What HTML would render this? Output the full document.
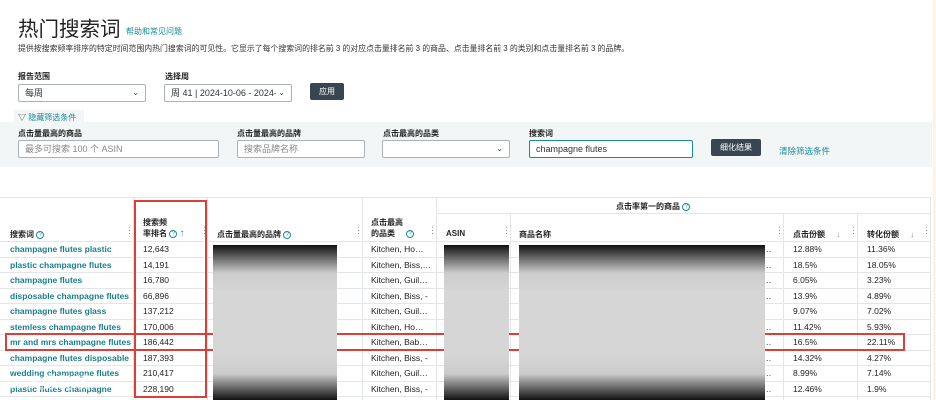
<!DOCTYPE html>
<html><head><meta charset="utf-8"><style>
*{margin:0;padding:0;box-sizing:border-box}
html,body{width:936px;height:400px;overflow:hidden}
body{background:#fff;font-family:"Liberation Sans","Noto Sans CJK SC",sans-serif;color:#222;position:relative}
.a{position:absolute;white-space:nowrap}
.lbl{font-size:8px;font-weight:bold;color:#222}
.box{position:absolute;border:1px solid #aab2b7;background:#fff;border-radius:2px;font-size:9px;color:#333;padding:0 6px;line-height:16px}
.ph{color:#888}
.btn{position:absolute;background:#3a4552;color:#fff;font-size:8px;text-align:center;border-radius:2px}
.link{color:#1a8a99}
.chev{position:absolute;right:6px;top:0;font-size:8px;color:#444}
.hd{font-size:8px;font-weight:bold;color:#222}
.q{display:inline-block;width:8px;height:8px;border:1px solid #1a8a99;border-radius:50%;font-size:6px;line-height:6px;text-align:center;color:#1a8a99;font-weight:normal;vertical-align:middle}
.dots{position:absolute;font-size:9px;color:#888;top:225px}
.row{position:absolute;left:0;width:930px;height:15.5px;border-bottom:1px solid #e3e6e8;font-size:8.5px;line-height:15px}
.row span{position:absolute}
.t{color:#1a7f8c;font-weight:bold;left:10px;width:122px;overflow:hidden}
.vl{position:absolute;top:197px;width:1px;height:203px;background:#e3e6e8}
.blur{position:absolute;top:245px;height:155px;background:linear-gradient(#111 0%,#ccc 18%,#d6d6d6 30%,#d6d6d6 70%,#ccc 83%,#111 100%)}
</style></head><body>
<div class="a" style="left:18px;top:12px;font-size:20.5px;color:#222">热门搜索词</div>
<div class="a link" style="left:126px;top:26px;font-size:8px">帮助和常见问题</div>
<div class="a" style="left:18px;top:43px;font-size:7.9px;color:#333">提供按搜索频率排序的特定时间范围内热门搜索词的可见性。它显示了每个搜索词的排名前 3 的对应点击量排名前 3 的商品、点击量排名前 3 的类别和点击量排名前 3 的品牌。</div>
<div class="a lbl" style="left:18px;top:71px">报告范围</div>
<div class="box" style="left:18px;top:84px;width:128px;height:18px">每周<span class="chev">⌄</span></div>
<div class="a lbl" style="left:165px;top:71px">选择周</div>
<div class="box" style="left:164px;top:84px;width:128px;height:18px">周 41 | 2024-10-06 - 2024-1<span class="chev" style="background:#fff;padding-left:2px">⌄</span></div>
<div class="btn" style="left:310px;top:83px;width:34px;height:17px;line-height:17px">应用</div>
<div class="a" style="left:14px;top:110px;height:13px;width:70px;background:#f2f6f7"></div>
<div class="a" style="left:0;top:122px;width:932px;height:45px;background:#f2f6f7"></div>
<div class="a link" style="left:18px;top:112px;font-size:8px"><span style="color:#333">▽</span> 隐藏筛选条件</div>
<div class="a lbl" style="left:18px;top:128px">点击量最高的商品</div>
<div class="box ph" style="left:18px;top:140px;width:201px;height:18px">最多可搜索 100 个 ASIN</div>
<div class="a lbl" style="left:237px;top:128px">点击量最高的品牌</div>
<div class="box ph" style="left:237px;top:140px;width:128px;height:18px">搜索品牌名称</div>
<div class="a lbl" style="left:383px;top:128px">点击最高的品类</div>
<div class="box" style="left:382px;top:140px;width:128px;height:18px"><span class="chev">⌄</span></div>
<div class="a lbl" style="left:529px;top:128px">搜索词</div>
<div class="box" style="left:529px;top:140px;width:164px;height:18px;border-color:#1a8a99">champagne flutes</div>
<div class="btn" style="left:711px;top:139px;width:50px;height:17px;line-height:17px">细化结果</div>
<div class="a link" style="left:779px;top:145px;font-size:8.5px">清除筛选条件</div>
<div class="a" style="left:933px;top:0;width:3px;height:400px;background:#fbf7d8"></div>
<div class="a" style="left:0;top:197px;width:930px;height:1px;background:#e3e6e8"></div>
<div class="a" style="left:436px;top:213px;width:494px;height:1px;background:#e3e6e8"></div>
<div class="a" style="left:0;top:241px;width:930px;height:1px;background:#e3e6e8"></div>
<div class="vl" style="left:133px"></div><div class="vl" style="left:207px"></div><div class="vl" style="left:362px"></div><div class="vl" style="left:436px"></div><div class="vl" style="left:510px;top:213px;height:187px"></div><div class="vl" style="left:783px;top:213px;height:187px"></div><div class="vl" style="left:857px;top:213px;height:187px"></div><div class="vl" style="left:930px"></div>
<div class="a hd" style="left:616px;top:201px">点击率第一的商品 <span class="q">?</span></div>
<div class="a hd" style="left:10px;top:229px">搜索词 <span class="q">?</span></div>
<div class="a hd" style="left:143px;top:217px;line-height:11px">搜索频<br>率排名 <span class="q">?</span> <span style="color:#1a8a99;font-size:10px">↑</span></div>
<div class="a hd" style="left:217px;top:229px">点击量最高的品牌 <span class="q">?</span></div>
<div class="a hd" style="left:371px;top:217px;line-height:11px">点击最高<br>的品类 &nbsp;&nbsp;&nbsp;&nbsp;<span class="q">?</span></div>
<div class="a hd" style="left:446px;top:229px">ASIN</div>
<div class="a hd" style="left:519px;top:229px">商品名称</div>
<div class="a hd" style="left:793px;top:229px">点击份额 &nbsp;&nbsp;&nbsp;&nbsp;<span style="color:#888;font-weight:normal">↓</span></div>
<div class="a hd" style="left:867px;top:229px">转化份额 &nbsp;&nbsp;&nbsp;&nbsp;<span style="color:#888;font-weight:normal">↓</span></div>
<div class="dots" style="left:125px">⋮</div><div class="dots" style="left:200px">⋮</div><div class="dots" style="left:354px">⋮</div><div class="dots" style="left:428px">⋮</div><div class="dots" style="left:502px">⋮</div><div class="dots" style="left:775px">⋮</div><div class="dots" style="left:849px">⋮</div><div class="dots" style="left:922px">⋮</div>
<div class="row" style="top:242px"><span class="t">champagne flutes plastic</span><span style="left:143px">12,643</span><span style="left:371px">Kitchen, Ho…</span><span style="left:763px">…</span><span style="left:793px">12.88%</span><span style="left:867px">11.36%</span></div>
<div class="row" style="top:257.5px"><span class="t">plastic champagne flutes</span><span style="left:143px">14,191</span><span style="left:371px">Kitchen, Biss,…</span><span style="left:763px">…</span><span style="left:793px">18.5%</span><span style="left:867px">18.05%</span></div>
<div class="row" style="top:273px"><span class="t">champagne flutes</span><span style="left:143px">16,780</span><span style="left:371px">Kitchen, Guil…</span><span style="left:763px">…</span><span style="left:793px">6.05%</span><span style="left:867px">3.23%</span></div>
<div class="row" style="top:288.5px"><span class="t">disposable champagne flutes</span><span style="left:143px">66,896</span><span style="left:371px">Kitchen, Biss, -</span><span style="left:763px">…</span><span style="left:793px">13.9%</span><span style="left:867px">4.89%</span></div>
<div class="row" style="top:304px"><span class="t">champagne flutes glass</span><span style="left:143px">137,212</span><span style="left:371px">Kitchen, Guil…</span><span style="left:793px">9.07%</span><span style="left:867px">7.02%</span></div>
<div class="row" style="top:319.5px"><span class="t">stemless champagne flutes</span><span style="left:143px">170,006</span><span style="left:371px">Kitchen, Ho…</span><span style="left:763px">…</span><span style="left:793px">11.42%</span><span style="left:867px">5.93%</span></div>
<div class="row" style="top:335px"><span class="t">mr and mrs champagne flutes</span><span style="left:143px">186,442</span><span style="left:371px">Kitchen, Bab…</span><span style="left:763px">…</span><span style="left:793px">16.5%</span><span style="left:867px">22.11%</span></div>
<div class="row" style="top:350.5px"><span class="t">champagne flutes disposable</span><span style="left:143px">187,393</span><span style="left:371px">Kitchen, Biss, -</span><span style="left:763px">…</span><span style="left:793px">14.32%</span><span style="left:867px">4.27%</span></div>
<div class="row" style="top:366px"><span class="t">wedding champagne flutes</span><span style="left:143px">210,417</span><span style="left:371px">Kitchen, Guil…</span><span style="left:763px">…</span><span style="left:793px">8.99%</span><span style="left:867px">7.14%</span></div>
<div class="row" style="top:381.5px"><span class="t">plastic flutes champagne disposable</span><span style="left:143px">228,190</span><span style="left:371px">Kitchen, Biss, -</span><span style="left:763px">…</span><span style="left:793px">12.46%</span><span style="left:867px">1.9%</span></div>
<div class="a" style="left:134px;top:200px;width:73px;height:198px;border:2px solid #d9403a"></div>
<div class="a" style="left:5px;top:333px;width:900px;height:18px;border:2px solid #d9403a"></div>
<div class="blur" style="left:213px;width:124px"></div>
<div class="blur" style="left:444px;width:65px"></div>
<div class="blur" style="left:519px;width:246px"></div>
<div class="a" style="left:6px;top:369px;font-size:16px;color:rgba(255,255,255,.7);font-weight:bold">㏄ 大数跨境</div>
</body></html>
